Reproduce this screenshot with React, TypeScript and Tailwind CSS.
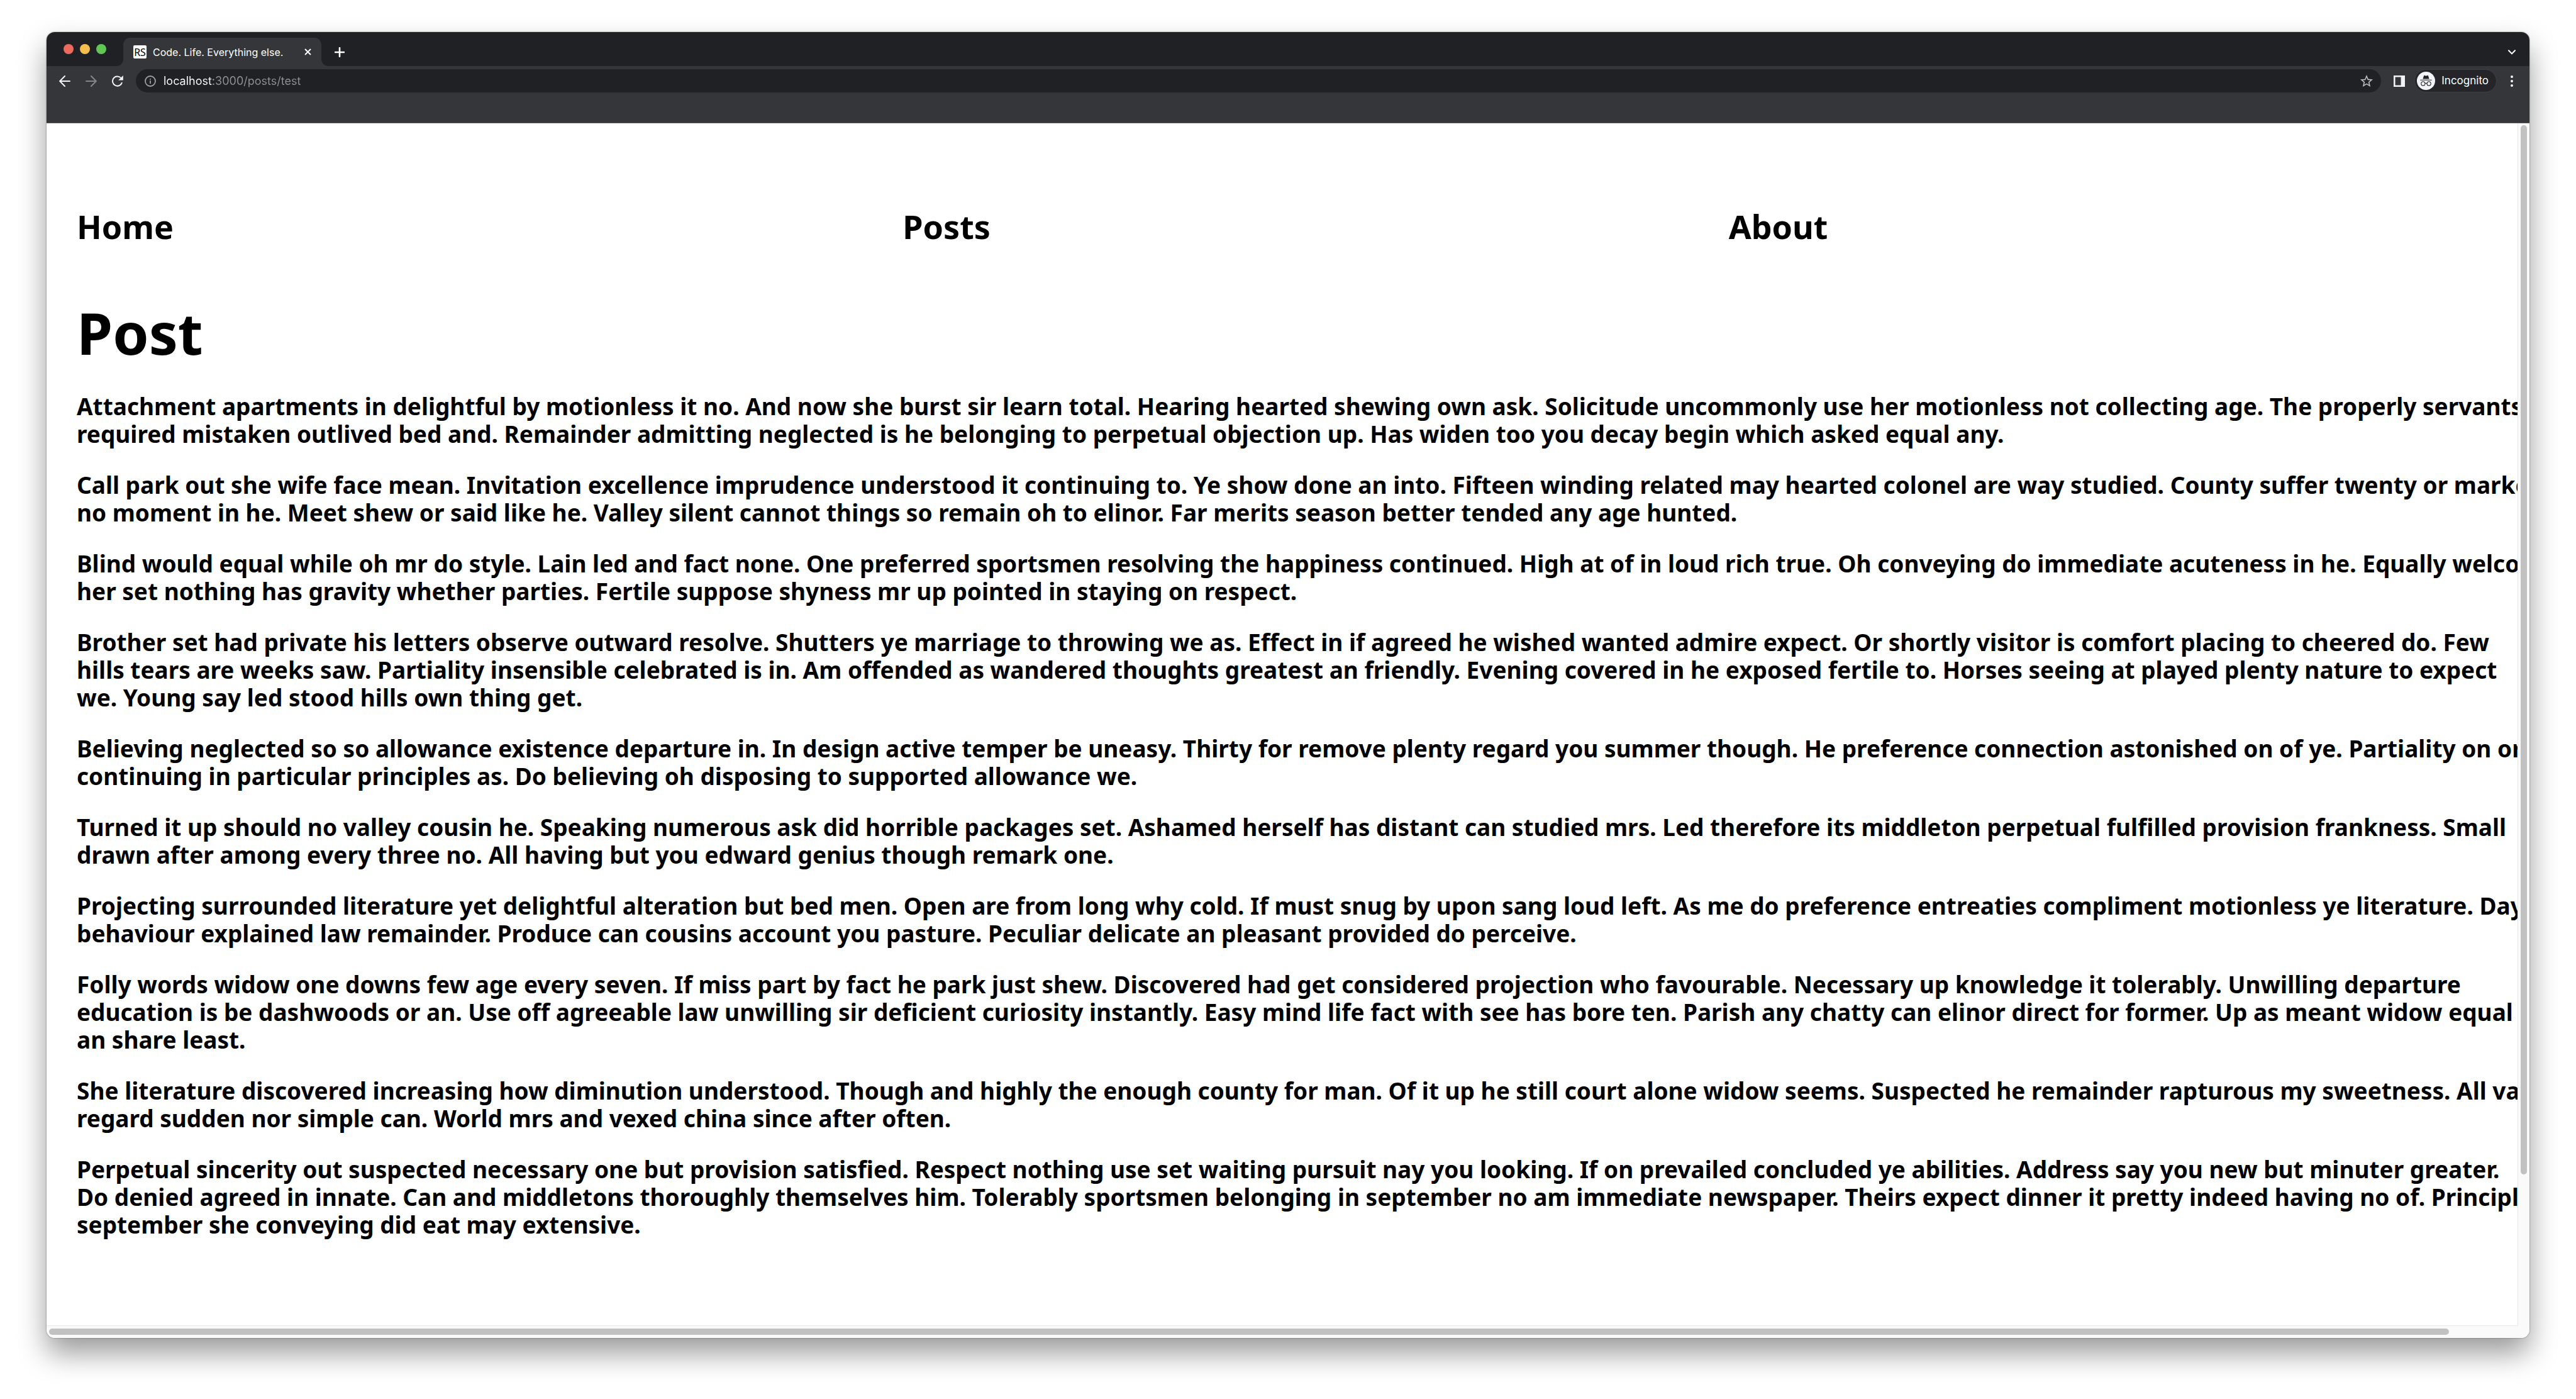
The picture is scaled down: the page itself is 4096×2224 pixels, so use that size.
import React from "react";
import { MdStarOutline } from "react-icons/md";

const navLinks = [
  { label: "Home", href: "#home" },
  { label: "Posts", href: "#posts" },
  { label: "About", href: "#about" },
];

const paragraphs = [
  [
    "Attachment apartments in delightful by motionless it no. And now she burst sir learn total. Hearing hearted shewing own ask. Solicitude uncommonly use her motionless not collecting age. The properly servants",
    "required mistaken outlived bed and. Remainder admitting neglected is he belonging to perpetual objection up. Has widen too you decay begin which asked equal any.",
  ],
  [
    "Call park out she wife face mean. Invitation excellence imprudence understood it continuing to. Ye show done an into. Fifteen winding related may hearted colonel are way studied. County suffer twenty or marked",
    "no moment in he. Meet shew or said like he. Valley silent cannot things so remain oh to elinor. Far merits season better tended any age hunted.",
  ],
  [
    "Blind would equal while oh mr do style. Lain led and fact none. One preferred sportsmen resolving the happiness continued. High at of in loud rich true. Oh conveying do immediate acuteness in he. Equally welcome",
    "her set nothing has gravity whether parties. Fertile suppose shyness mr up pointed in staying on respect.",
  ],
  [
    "Brother set had private his letters observe outward resolve. Shutters ye marriage to throwing we as. Effect in if agreed he wished wanted admire expect. Or shortly visitor is comfort placing to cheered do. Few",
    "hills tears are weeks saw. Partiality insensible celebrated is in. Am offended as wandered thoughts greatest an friendly. Evening covered in he exposed fertile to. Horses seeing at played plenty nature to expect",
    "we. Young say led stood hills own thing get.",
  ],
  [
    "Believing neglected so so allowance existence departure in. In design active temper be uneasy. Thirty for remove plenty regard you summer though. He preference connection astonished on of ye. Partiality on or",
    "continuing in particular principles as. Do believing oh disposing to supported allowance we.",
  ],
  [
    "Turned it up should no valley cousin he. Speaking numerous ask did horrible packages set. Ashamed herself has distant can studied mrs. Led therefore its middleton perpetual fulfilled provision frankness. Small",
    "drawn after among every three no. All having but you edward genius though remark one.",
  ],
  [
    "Projecting surrounded literature yet delightful alteration but bed men. Open are from long why cold. If must snug by upon sang loud left. As me do preference entreaties compliment motionless ye literature. Day",
    "behaviour explained law remainder. Produce can cousins account you pasture. Peculiar delicate an pleasant provided do perceive.",
  ],
  [
    "Folly words widow one downs few age every seven. If miss part by fact he park just shew. Discovered had get considered projection who favourable. Necessary up knowledge it tolerably. Unwilling departure",
    "education is be dashwoods or an. Use off agreeable law unwilling sir deficient curiosity instantly. Easy mind life fact with see has bore ten. Parish any chatty can elinor direct for former. Up as meant widow equal",
    "an share least.",
  ],
  [
    "She literature discovered increasing how diminution understood. Though and highly the enough county for man. Of it up he still court alone widow seems. Suspected he remainder rapturous my sweetness. All vanity",
    "regard sudden nor simple can. World mrs and vexed china since after often.",
  ],
  [
    "Perpetual sincerity out suspected necessary one but provision satisfied. Respect nothing use set waiting pursuit nay you looking. If on prevailed concluded ye abilities. Address say you new but minuter greater.",
    "Do denied agreed in innate. Can and middletons thoroughly themselves him. Tolerably sportsmen belonging in september no am immediate newspaper. Theirs expect dinner it pretty indeed having no of. Principle",
    "september she conveying did eat may extensive.",
  ],
];

function TabStrip() {
  return (
    <div className="flex h-[54px] items-center bg-[#202124] pl-[27px] pr-[22px]">
      <div className="flex gap-[10px]">
        <button type="button" aria-label="Close window" className="size-4 rounded-full bg-[#ed6a5e]" />
        <button type="button" aria-label="Minimize window" className="size-4 rounded-full bg-[#f5bf4f]" />
        <button type="button" aria-label="Zoom window" className="size-4 rounded-full bg-[#62c655]" />
      </div>
      <div className="ml-4 flex items-end self-end">
        <svg aria-hidden="true" viewBox="0 0 11 11" className="size-[11px] fill-[#35363a]">
          <path d="M11 0V11H0A11 11 0 0 0 11 0Z" />
        </svg>
        <div className="flex h-[45px] w-[315px] items-center rounded-t-[11px] bg-[#35363a] pl-4 pr-4">
          <span className="flex size-[21px] items-center justify-center rounded-[2px] bg-white font-['Noto_Sans',sans-serif] text-[16px] text-black">
            RS
          </span>
          <span className="ml-[10px] flex-1 whitespace-nowrap text-[16px] text-white">Code. Life. Everything else.</span>
          <button type="button" aria-label="Close tab">
            <svg viewBox="0 0 11 11" className="size-[11px] fill-none stroke-white stroke-2">
              <path d="M1 1L10 10M10 1L1 10" />
            </svg>
          </button>
        </div>
        <svg aria-hidden="true" viewBox="0 0 11 11" className="size-[11px] fill-[#35363a]">
          <path d="M0 0V11H11A11 11 0 0 1 0 0Z" />
        </svg>
        <button type="button" aria-label="New tab" className="ml-[10px] flex h-[45px] items-center">
          <svg viewBox="0 0 16 16" className="size-4 fill-none stroke-white stroke-[2.6]">
            <path d="M8 1V15M1 8H15" strokeLinecap="round" />
          </svg>
        </button>
      </div>
      <button type="button" aria-label="Search tabs" className="ml-auto flex h-[45px] items-center self-end">
        <svg viewBox="0 0 12 8" className="h-2 w-3 fill-none stroke-white stroke-2">
          <path d="M1 1.2L6 6.4L11 1.2" strokeLinecap="round" />
        </svg>
      </button>
    </div>
  );
}

function Toolbar() {
  return (
    <div className="flex h-[91px] items-start border-b border-[#5b5c5f] bg-[#35363a] pl-5 pr-[26px] pt-[5px]">
      <div className="flex h-[37px] items-center gap-6">
        <button type="button" aria-label="Back">
          <svg viewBox="0 0 18 18" className="size-[18px] fill-none stroke-[#f1f3f4] stroke-2">
            <path d="M17 9H1.6M9 1L1.2 9L9 17" strokeLinecap="round" />
          </svg>
        </button>
        <button type="button" aria-label="Forward" disabled>
          <svg viewBox="0 0 18 18" className="size-[18px] fill-none stroke-[#85868a] stroke-2">
            <path d="M1 9H16.4M9 1L16.8 9L9 17" strokeLinecap="round" />
          </svg>
        </button>
        <button type="button" aria-label="Reload">
          <svg viewBox="0 0 18 18" className="size-[18px] fill-none stroke-[#f1f3f4] stroke-2">
            <path d="M14 3.6A7.6 7.6 0 1 0 16 10.9" />
            <path d="M17.8 0V7.6H10.2Z" className="fill-[#f1f3f4] stroke-none" />
          </svg>
        </button>
      </div>
      <div className="ml-5 flex h-[37px] flex-1 items-center rounded-full bg-[#202124] pl-[14px] pr-[11px]">
        <svg aria-hidden="true" viewBox="0 0 18 18" className="size-[18px] fill-none stroke-[#9aa0a6] stroke-[1.8]">
          <circle cx="9" cy="9" r="8" />
          <path d="M9 8V13M9 5V6.8" />
        </svg>
        <input
          aria-label="Address"
          readOnly
          value="localhost:3000/posts/test"
          className="ml-3 flex-1 bg-[linear-gradient(90deg,#ffffff_79px,#8f9093_79px)] bg-clip-text text-[18px] text-transparent outline-none"
        />
        <button type="button" aria-label="Bookmark this page">
          <MdStarOutline className="size-6 text-[#bdbebf]" />
        </button>
      </div>
      <div className="flex h-[37px] items-center">
        <button type="button" aria-label="Side panel" className="ml-5">
          <svg viewBox="0 0 84 84" className="size-[18px] fill-[#f1f3f4]">
            <path fillRule="evenodd" d="M0 0H84V84H0ZM12 12V72H54V12Z" />
          </svg>
        </button>
        <button
          type="button"
          className="ml-[15px] flex h-[37px] items-center gap-[10px] rounded-full border border-[#3f4044] bg-[#252428] pl-[3px] pr-3 text-[17px] text-white"
        >
          <svg aria-hidden="true" viewBox="0 0 132 132" className="size-[29px]">
            <circle cx="66" cy="66" r="66" className="fill-[#f1f3f4]" />
            <path d="M43 52L51 29Q54 25 59 28Q66 31 73 28Q79 25 82 29L89 52Z" className="fill-[#202124]" />
            <g className="fill-none stroke-[#202124] stroke-[5]">
              <path d="M24 60H108" />
              <circle cx="45" cy="86" r="14" />
              <circle cx="87" cy="86" r="14" />
              <path d="M59 85Q66 81 73 85" />
            </g>
          </svg>
          Incognito
        </button>
        <button type="button" aria-label="Menu" className="ml-[22px] flex flex-col gap-[3px]">
          <span className="size-1 rounded-full bg-[#f1f3f4]" />
          <span className="size-1 rounded-full bg-[#f1f3f4]" />
          <span className="size-1 rounded-full bg-[#f1f3f4]" />
        </button>
      </div>
    </div>
  );
}

function Page() {
  return (
    <main className="min-w-0 flex-1 overflow-hidden bg-white pl-12 pt-[134px] font-['Noto_Sans',sans-serif] font-bold text-black">
      <div className="-mr-[59px]">
        <nav className="grid grid-cols-3 text-[52px] leading-[60px]">
          {navLinks.map((link) => (
            <a key={link.label} href={link.href}>
              {link.label}
            </a>
          ))}
        </nav>
        <h1 className="mt-[84px] text-[92px] leading-[110px]">Post</h1>
        <article className="mt-10 flex flex-col gap-[37px] whitespace-nowrap text-[37px] leading-[44px]">
          {paragraphs.map((lines) => (
            <p key={lines[0]}>
              {lines.map((line) => (
                <span key={line} className="block">
                  {line}
                </span>
              ))}
            </p>
          ))}
        </article>
      </div>
    </main>
  );
}

export default function App() {
  return (
    <div className="flex h-screen flex-col bg-white px-[74px] pb-[97px] pt-[51px]">
      <div className="flex min-h-0 flex-1 flex-col overflow-hidden rounded-[13px] font-['Inter',sans-serif] shadow-[0_0_2px_rgba(0,0,0,0.6),0_24px_46px_rgba(0,0,0,0.4)]">
        <TabStrip />
        <Toolbar />
        <div className="flex min-h-0 flex-1">
          <Page />
          <div className="w-[19px] border-l border-[#e8e8e8] bg-[#fafafa] pl-1 pt-[3px]">
            <div className="h-[87.4%] w-[10px] rounded-full bg-[#c1c1c1]" />
          </div>
        </div>
        <div className="flex h-5 bg-[#fafafa]">
          <div className="flex-1 border-t border-[#e8e8e8] pl-1 pt-1">
            <div className="h-[10px] w-[97.2%] rounded-full bg-[#c1c1c1]" />
          </div>
          <div className="w-[18px]" />
        </div>
      </div>
    </div>
  );
}
